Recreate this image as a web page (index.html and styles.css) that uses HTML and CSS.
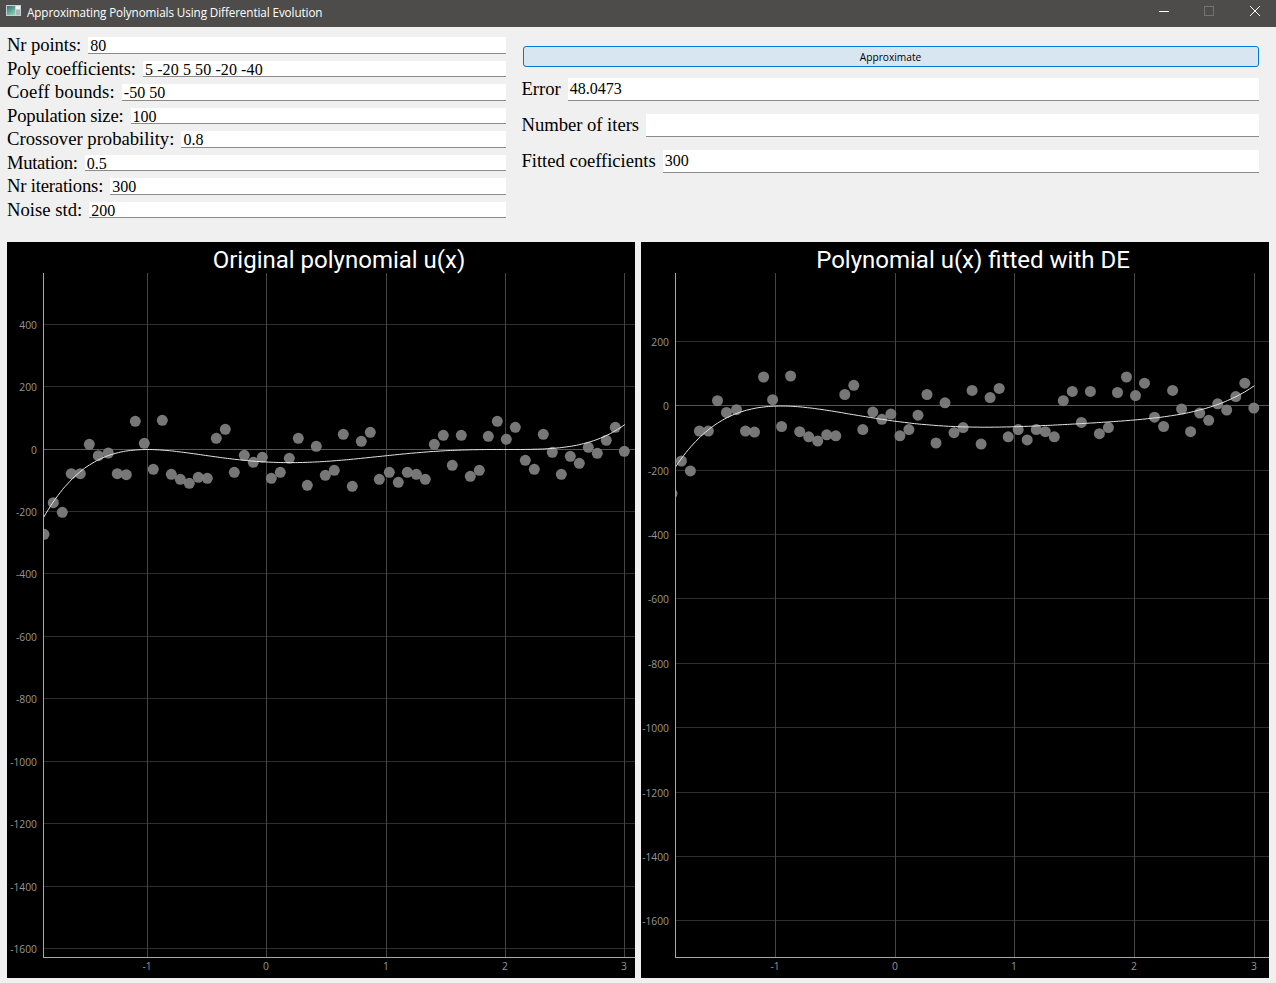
FILE: index.html
```html
<!DOCTYPE html>
<html lang="en">
<head>
<meta charset="utf-8">
<title>Approximating Polynomials Using Differential Evolution</title>
<link rel="stylesheet" href="styles.css">
</head>
<body>
<header class="titlebar">
  <svg class="app-icon" width="15" height="11" viewBox="0 0 15 11">
    <defs>
      <linearGradient id="icon-fill" x1="0" y1="0" x2="0.6" y2="1">
        <stop offset="0" stop-color="#2b6f86"/>
        <stop offset="1" stop-color="#86c9a4"/>
      </linearGradient>
    </defs>
    <rect x="0" y="0" width="15" height="11" fill="#c9d0d4"/>
    <rect x="1" y="1" width="8" height="9" fill="url(#icon-fill)"/>
    <rect x="10" y="1" width="4" height="3" fill="#f2f4f5"/>
    <rect x="10" y="5" width="4" height="5" fill="#aab4ba"/>
  </svg>
  <span class="title-text">Approximating Polynomials Using Differential Evolution</span>
  <div class="win-buttons">
    <svg class="win-btn" width="46" height="27" viewBox="0 0 46 27"><path d="M21 11.500h10" stroke="#fff" fill="none"/></svg>
    <svg class="win-btn" width="46" height="27" viewBox="0 0 46 27"><rect x="20.500" y="6.500" width="9" height="9" stroke="#747370" fill="none"/></svg>
    <svg class="win-btn" width="46" height="27" viewBox="0 0 46 27"><path d="M20 6l10 10M30 6L20 16" stroke="#fff" fill="none"/></svg>
  </div>
</header>

<section class="controls">
  <div class="form-left">
    <div class="row"><span class="lbl tight-1">Nr points:</span><div class="field">80</div></div>
    <div class="row"><span class="lbl tight-1">Poly coefficients:</span><div class="field wide">5 -20 5 50 -20 -40</div></div>
    <div class="row"><span class="lbl loose">Coeff bounds:</span><div class="field">-50 50</div></div>
    <div class="row"><span class="lbl tight-2">Population size:</span><div class="field">100</div></div>
    <div class="row"><span class="lbl">Crossover probability:</span><div class="field">0.8</div></div>
    <div class="row"><span class="lbl tight-3">Mutation:</span><div class="field">0.5</div></div>
    <div class="row"><span class="lbl tight-2">Nr iterations:</span><div class="field">300</div></div>
    <div class="row"><span class="lbl">Noise std:</span><div class="field">200</div></div>
  </div>
  <div class="form-right">
    <button class="approx" type="button">Approximate</button>
    <div class="row big"><span class="lbl">Error</span><div class="field">48.0473</div></div>
    <div class="row big"><span class="lbl">Number of iters</span><div class="field"></div></div>
    <div class="row big"><span class="lbl">Fitted coefficients</span><div class="field">300</div></div>
  </div>
</section>

<main class="plots">
  <figure class="plot" id="plot-original">
    <figcaption class="plot-title">Original polynomial u(x)</figcaption>
  </figure>
  <figure class="plot" id="plot-fitted">
    <figcaption class="plot-title">Polynomial u(x) fitted with DE</figcaption>
  </figure>
</main>
<script src="plot.js"></script>
</body>
</html>
```
FILE: styles.css
```css
* { box-sizing: border-box; }
html, body { margin: 0; height: 100%; }
body {
  width: 1276px;
  height: 983px;
  overflow: hidden;
  background: #f0f0f0;
  font-family: "Liberation Serif", serif;
  color: #000;
}
.titlebar {
  height: 27px;
  background: #4d4c4a;
  display: flex;
  align-items: center;
  padding-left: 6px;
  color: #fff;
  font-family: "Open Sans", sans-serif;
  font-size: 11.700px;
}
.app-icon { margin-right: 6px; margin-top: -6px; }
.title-text { letter-spacing: -0.1px; margin-top: -4px; }
.win-buttons { margin-left: auto; display: flex; }
.win-btn { display: block; }

.controls {
  display: flex;
  height: 215px;
  padding: 10px 17px 0 7px;
  gap: 15.500px;
}
.form-left { width: 499px; display: flex; flex-direction: column; gap: 7px; }
.form-right { flex: 1; padding-top: 9px; display: flex; flex-direction: column; gap: 12.500px; }
.row { display: flex; align-items: center; height: 16.500px; gap: 7px; }
.row.big { height: 23.500px; }
.lbl { font-size: 18.670px; line-height: 17px; white-space: nowrap; margin-top: -1px; }
.row.big .lbl { letter-spacing: -0.04px; }
.lbl.tight-1 { letter-spacing: -0.1px; }
.lbl.tight-2 { letter-spacing: -0.2px; }
.lbl.tight-3 { letter-spacing: -0.33px; }
.lbl.loose { letter-spacing: 0.15px; }
.field {
  flex: 1;
  height: 100%;
  background: #fff;
  border-bottom: 1px solid #8b8b8b;
  font-size: 16px;
  line-height: 17px;
  padding: 0 2px;
  white-space: nowrap;
}
.field.wide { letter-spacing: 0.1px; }
.row.big .field { line-height: 21px; padding-top: 0; }
.approx {
  height: 21px;
  margin: 0 0 -2px 1px;
  width: 736px;
  background: #d8e6f2;
  border: 1px solid #0078d7;
  border-radius: 3px;
  font-family: "Open Sans", sans-serif;
  font-size: 10.200px;
  color: #000;
  padding: 0;
}

.plots {
  display: flex;
  gap: 6px;
  padding-left: 7px;
}
.plot {
  margin: 0;
  width: 628px;
  height: 736px;
  background: #000;
}
.plot-title {
  height: 31px;
  padding-left: 36px;
  text-align: center;
  color: #fff;
  font-family: Roboto, sans-serif;
  font-size: 24px;
  line-height: 37px;
  white-space: nowrap;
}
.plot-svg { display: block; }
.grid-line { stroke: #2d2d2d; stroke-width: 1; shape-rendering: crispEdges; }
.grid-line.v { stroke: #464646; }
.axis-line { stroke: #a8a8a8; stroke-width: 1; shape-rendering: crispEdges; }
.zero-line { stroke: #565656; stroke-width: 1; shape-rendering: crispEdges; }
.tick {
  fill: #969696;
  font-family: "Open Sans", sans-serif;
  font-size: 10.300px;
}
.dot { fill: #808080; fill-opacity: 0.93; }
.curve { fill: none; stroke: #e6e6e6; stroke-width: 1; }
```
FILE: plot.js
```js
// Noisy samples, read as pixel positions in the "original" plot's page coordinates.
var SAMPLES = [
  [44,534.3],[53.3,502.7],[62.3,512.3],[71.3,473.7],[80.3,473.7],[89.3,444.3],[98.3,455.7],[108.3,453],
  [117.3,473.7],[126.3,474.7],[135.3,421.3],[144.3,443.3],[153.3,469.3],[162.3,420.3],[171.3,474.3],
  [180.3,479.3],[189.3,483.3],[198.3,477.3],[207.3,478.3],[216.3,438.3],[225.3,429.3],[234.3,472.3],
  [244.3,455.3],[253.3,462.3],[262.3,457.3],[271.3,478.3],[280.3,472.3],[289.3,458.3],[298.3,438.3],
  [307.3,485.3],[316.3,446.3],[325.3,475.3],[334.3,470.3],[343.3,434.3],[352.3,486.3],[361.3,441.3],
  [370.3,432.3],[379.3,479.3],[389.3,472.3],[398.3,482.3],[407.3,472.3],[416.3,474.3],[425.3,479.3],
  [434.3,444.3],[443.3,435.3],[452.3,465.3],[461.3,435.3],[470.3,476.3],[479.3,470.3],[488.3,436.3],
  [497.3,421.3],[506.3,439.3],[515.3,427.3],[525.3,460.3],[534.3,469.3],[543.3,434.3],[552.3,452.3],
  [561.3,474.3],[570.3,456.3],[579.3,463.3],[588.3,447.3],[597.3,453.3],[606.3,440.3],[615.3,427.3],
  [624.3,451.3]
];
var REF = { x0: 266.6, sx: 119.4, y0: 449.5, sy: 0.3122 };

function lagrange(knots) {
  return function (x) {
    var total = 0;
    knots.forEach(function (a, i) {
      var term = a[1];
      knots.forEach(function (b, j) { if (i !== j) term *= (x - b[0]) / (a[0] - b[0]); });
      total += term;
    });
    return total;
  };
}
function truePoly(x) {
  return 5 * Math.pow(x, 5) - 20 * Math.pow(x, 4) + 5 * Math.pow(x, 3) + 50 * x * x - 20 * x - 40;
}
var fitted = lagrange([[-1.87,-209],[-1,0],[0,-47],[1,-64],[2,-43],[3,63]]);

var PLOTS = [
  { id: "plot-original", panelX: 7, axisX: 43, x0: 266.6, sx: 119.4, y0: 449.5, sy: 0.3122, top: 400, fn: truePoly, xStart: -1.87 },
  { id: "plot-fitted", panelX: 641, axisX: 675, x0: 895.2, sx: 119.7, y0: 406.1, sy: 0.3221, top: 200, fn: fitted, xStart: -1.87 }
];
var NS = "http://www.w3.org/2000/svg";
var TOP = 242 + 31, W = 628, H = 705, BOTTOM = 957;

function el(parent, name, attrs, text) {
  var n = document.createElementNS(NS, name);
  Object.keys(attrs).forEach(function (k) { n.setAttribute(k, attrs[k]); });
  if (text !== undefined) n.textContent = text;
  parent.appendChild(n);
  return n;
}

PLOTS.forEach(function (p) {
  var svg = el(document.getElementById(p.id), "svg", { "class": "plot-svg", width: W, height: H, viewBox: [p.panelX, TOP, W, H].join(" ") });
  var right = p.panelX + W;
  var v, y, x, i;
  var clipId = p.id + "-clip";
  var clipPath = el(el(svg, "defs", {}), "clipPath", { id: clipId });
  el(clipPath, "rect", { x: p.axisX, y: TOP, width: right - p.axisX, height: BOTTOM - TOP });

  for (v = p.top; v >= -1600; v -= 200) {
    y = Math.floor(p.y0 - 0.5 - v * p.sy) + 0.5;
    el(svg, "line", { "class": v === 0 ? "zero-line" : "grid-line", x1: p.axisX, x2: right, y1: y, y2: y });
    el(svg, "text", { "class": "tick", x: p.axisX - 6, y: y + 4, "text-anchor": "end" }, String(v));
  }
  for (v = -1; v <= 3; v++) {
    x = Math.floor(p.x0 + v * p.sx) + 0.5;
    el(svg, "line", { "class": "grid-line v", x1: x, x2: x, y1: TOP, y2: BOTTOM });
    el(svg, "text", { "class": "tick", x: x - 0.5, y: BOTTOM + 13, "text-anchor": "middle" }, String(v));
  }

  var layer = el(svg, "g", { "clip-path": "url(#" + clipId + ")" });
  SAMPLES.forEach(function (s) {
    var dataX = (s[0] - REF.x0) / REF.sx;
    var dataY = (REF.y0 - s[1]) / REF.sy;
    el(layer, "circle", { "class": "dot", cx: (p.x0 + dataX * p.sx).toFixed(1), cy: (p.y0 - dataY * p.sy).toFixed(1), r: 5.5 });
  });
  var pts = [];
  for (i = 0; i <= 240; i++) {
    x = p.xStart + (3 - p.xStart) * i / 240;
    pts.push((p.x0 + x * p.sx).toFixed(1) + "," + (p.y0 - p.fn(x) * p.sy).toFixed(1));
  }
  el(layer, "polyline", { "class": "curve", points: pts.join(" ") });

  el(svg, "line", { "class": "axis-line", x1: p.axisX + 0.5, x2: p.axisX + 0.5, y1: TOP, y2: BOTTOM + 0.5 });
  el(svg, "line", { "class": "axis-line", x1: p.axisX, x2: right, y1: BOTTOM + 0.5, y2: BOTTOM + 0.5 });
});
```
